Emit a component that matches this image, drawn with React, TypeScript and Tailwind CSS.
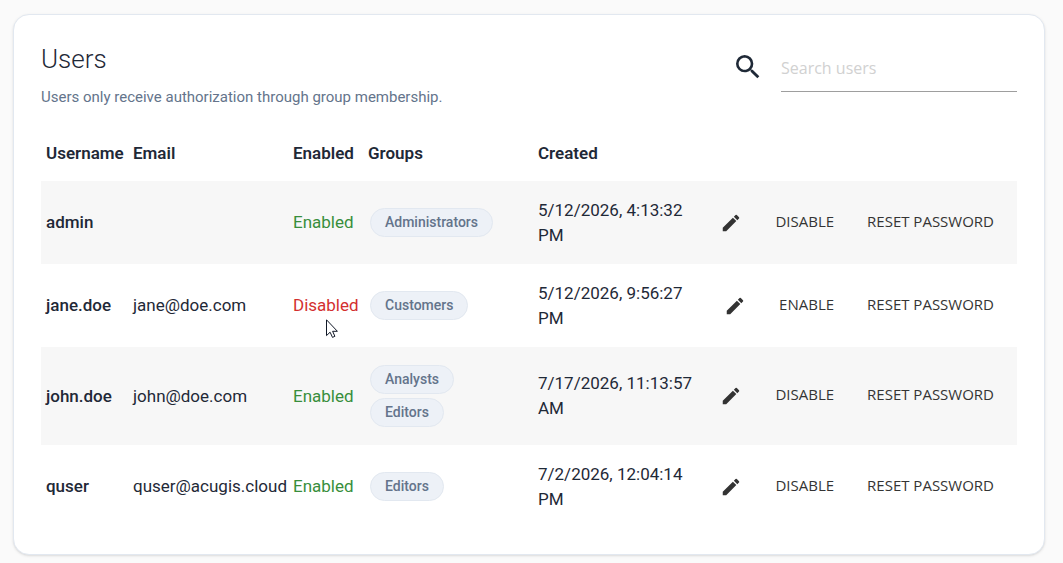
import { useState } from "react";
import { MdEdit, MdSearch } from "react-icons/md";

type User = {
  username: string;
  email: string;
  enabled: boolean;
  groups: string[];
  created: string;
};

const initialUsers: User[] = [
  { username: "admin", email: "", enabled: true, groups: ["Administrators"], created: "5/12/2026, 4:13:32 PM" },
  { username: "jane.doe", email: "jane@doe.com", enabled: false, groups: ["Customers"], created: "5/12/2026, 9:56:27 PM" },
  { username: "john.doe", email: "john@doe.com", enabled: true, groups: ["Analysts", "Editors"], created: "7/17/2026, 11:13:57 AM" },
  { username: "quser", email: "quser@acugis.cloud", enabled: true, groups: ["Editors"], created: "7/2/2026, 12:04:14 PM" },
];

function GroupChip({ name }: { name: string }) {
  return (
    <li className="rounded-full border border-[#e2e8f0] bg-[#edf1f7] px-[14px] text-sm leading-[27px] font-medium text-[#64748b]">
      {name}
    </li>
  );
}

function Cursor() {
  return (
    <svg viewBox="0 0 12 19" className="pointer-events-none absolute top-6 left-[33px] h-[19px] w-3" aria-hidden="true">
      <path
        d="M.5 .8V16.6L4.1 13.2L6.5 18.4L8.9 17.3L6.6 12.3H11.4Z"
        fill="#fff"
        stroke="#111827"
        strokeLinejoin="round"
      />
    </svg>
  );
}

function UserRow({ user, onToggle }: { user: User; onToggle: () => void }) {
  const button = "cursor-pointer px-4 pb-1 font-['Open_Sans',sans-serif] text-[15px] leading-6 text-[#343434] uppercase";

  return (
    <tr className="h-[83px] odd:bg-[#f7f7f7]">
      <th scope="row" className="px-[5px] text-left font-medium">{user.username}</th>
      <td className="px-[5px]">{user.email}</td>
      <td className="px-[5px]">
        <span className={user.enabled ? "text-[#388e3c]" : "relative text-[#d32f2f]"}>
          {user.enabled ? "Enabled" : "Disabled"}
          {user.username === "jane.doe" && <Cursor />}
        </span>
      </td>
      <td className="px-[7px] py-[18px]">
        <ul className="flex flex-col items-start gap-1">
          {user.groups.map((group) => (
            <GroupChip key={group} name={group} />
          ))}
        </ul>
      </td>
      <td className="px-[5px] py-4">{user.created}</td>
      <td className="pr-[7px]">
        <div className="flex items-center justify-end gap-px whitespace-nowrap">
          <button className="cursor-pointer px-4 text-[#333]" aria-label={`Edit ${user.username}`}>
            <MdEdit className="size-[22px]" />
          </button>
          <button className={button} onClick={onToggle}>
            {user.enabled ? "Disable" : "Enable"}
          </button>
          <button className={button}>Reset password</button>
        </div>
      </td>
    </tr>
  );
}

export default function App() {
  const [users, setUsers] = useState(initialUsers);
  const [search, setSearch] = useState("");

  const visible = users.filter((user) => user.username.includes(search.toLowerCase()));

  const toggle = (username: string) => {
    setUsers(users.map((user) => (user.username === username ? { ...user, enabled: !user.enabled } : user)));
  };

  return (
    <div className="min-h-screen bg-[#fafafa] pt-[14px] pr-[18px] pb-2 pl-[13px] font-[Roboto,sans-serif] text-[#1f2937]">
      <main className="rounded-2xl border border-[#e2e8f0] bg-white px-[27px] pt-[26px] pb-[26px] shadow-sm">
        <header className="flex items-start justify-between">
          <div>
            <h1 className="text-[26px] leading-9 font-light">Users</h1>
            <p className="mt-2 text-[15px] leading-6 text-[#64748b]">
              Users only receive authorization through group membership.
            </p>
          </div>
          <div className="flex items-center gap-[17px]">
            <label htmlFor="search">
              <MdSearch className="size-8" title="Search users" />
            </label>
            <input
              id="search"
              type="text"
              value={search}
              onChange={(e) => setSearch(e.target.value)}
              placeholder="Search users"
              className="h-[51px] w-[236px] border-b border-[#9e9e9e] pt-1 font-['Open_Sans',sans-serif] text-base outline-none placeholder:text-[#d1d1d1]"
            />
          </div>
        </header>

        <table className="mt-4 w-full table-fixed border-collapse text-[17px] leading-[25px]">
          <colgroup>
            <col className="w-[87px]" />
            <col className="w-[160px]" />
            <col className="w-[75px]" />
            <col className="w-[170px]" />
            <col className="w-[165px]" />
            <col />
          </colgroup>
          <thead>
            <tr className="h-14 text-left">
              <th className="px-[5px] font-semibold">Username</th>
              <th className="px-[5px] font-semibold">Email</th>
              <th className="px-[5px] font-semibold">Enabled</th>
              <th className="px-[5px] font-semibold">Groups</th>
              <th className="px-[5px] font-semibold">Created</th>
              <td />
            </tr>
          </thead>
          <tbody>
            {visible.map((user) => (
              <UserRow key={user.username} user={user} onToggle={() => toggle(user.username)} />
            ))}
          </tbody>
        </table>
      </main>
    </div>
  );
}
